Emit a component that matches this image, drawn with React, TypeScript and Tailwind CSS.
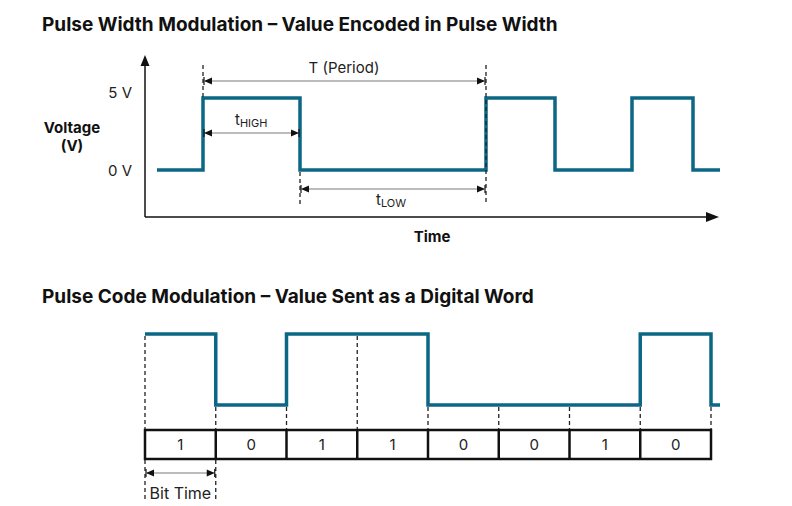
const TEAL = '#0b6784';

// dimension arrow with a tick and filled head at each end
function DimArrow({ x1, x2, y }: { x1: number; x2: number; y: number }) {
  return (
    <g>
      <line x1={x1 + 2} y1={y} x2={x2 - 2} y2={y} stroke="#7a7a7a" strokeWidth={1.2} />
      <polygon points={`${x1 + 1},${y} ${x1 + 9},${y - 3.5} ${x1 + 9},${y + 3.5}`} fill="#111" />
      <polygon points={`${x2 - 1},${y} ${x2 - 9},${y - 3.5} ${x2 - 9},${y + 3.5}`} fill="#111" />
      <line x1={x1 + 1} y1={y - 4} x2={x1 + 1} y2={y + 4} stroke="#111" strokeWidth={1.2} />
      <line x1={x2 - 1} y1={y - 4} x2={x2 - 1} y2={y + 4} stroke="#111" strokeWidth={1.2} />
    </g>
  );
}

function Dash({ x, y1, y2 }: { x: number; y1: number; y2: number }) {
  return <line x1={x} y1={y1} x2={x} y2={y2} stroke="#222" strokeWidth={1.3} strokeDasharray="4 3" />;
}

function PwmChart() {
  return (
    <svg width={792} height={225} viewBox="0 40 792 225" className="block font-['Inter',sans-serif]">
      {/* axes */}
      <line x1={145} y1={62} x2={145} y2={217} stroke="#111" strokeWidth={1.5} />
      <polygon points="145,55 140.5,66 149.5,66" fill="#111" />
      <line x1={145} y1={217} x2={708} y2={217} stroke="#111" strokeWidth={1.5} />
      <polygon points="719,217 706,212 706,222" fill="#111" />

      {/* waveform */}
      <polyline
        points="157,170 203,170 203,98 300,98 300,170 486,170 486,98 555,98 555,170 632,170 632,98 693,98 693,170 720,170"
        fill="none"
        stroke={TEAL}
        strokeWidth={3.5}
      />

      <Dash x={203} y1={65} y2={97} />
      <Dash x={300} y1={172} y2={204} />
      <Dash x={486} y1={65} y2={204} />

      <DimArrow x1={203} x2={486} y={81} />
      <DimArrow x1={203} x2={300} y={133} />
      <DimArrow x1={300} x2={486} y={189} />

      <text x={344} y={73} textAnchor="middle" fontSize={15} fill="#222">T (Period)</text>
      <text x={235} y={125} fontSize={15} fill="#222">
        t<tspan fontSize={11} dy={2}>HIGH</tspan>
      </text>
      <text x={376} y={205} fontSize={15} fill="#222">
        t<tspan fontSize={11} dy={2}>LOW</tspan>
      </text>

      <text x={132} y={98} textAnchor="end" fontSize={15} fill="#222">5 V</text>
      <text x={132} y={176} textAnchor="end" fontSize={15} fill="#222">0 V</text>
      <text x={72} y={133} textAnchor="middle" fontSize={15} fontWeight={700} fill="#111">Voltage</text>
      <text x={72} y={151} textAnchor="middle" fontSize={15} fontWeight={700} fill="#111">(V)</text>
      <text x={432} y={242} textAnchor="middle" fontSize={15} fontWeight={700} fill="#111">Time</text>
    </svg>
  );
}

const BITS = [1, 0, 1, 1, 0, 0, 1, 0];
// signal level per bit slot as drawn in the figure
const LEVELS = [1, 0, 1, 1, 0, 0, 0, 1];
const X0 = 145;
const CELL = 70.75;

function PcmChart() {
  const xs = LEVELS.map((_, i) => X0 + i * CELL);
  const hi = 334;
  const lo = 405;
  let pts = '';
  LEVELS.forEach((b, i) => {
    const y = b ? hi : lo;
    pts += `${xs[i]},${y} ${xs[i] + CELL},${y} `;
  });
  pts += `${X0 + 8 * CELL},${lo} 720,${lo}`;

  return (
    <svg width={792} height={196} viewBox="0 310 792 196" className="block font-['Inter',sans-serif]">
      <polyline points={pts} fill="none" stroke={TEAL} strokeWidth={3.5} />

      {xs.concat([X0 + 8 * CELL]).map((x, i) => {
        const prev = i > 0 ? LEVELS[i - 1] : 1;
        const cur = i < 8 ? LEVELS[i] : 0;
        const top = prev === 1 && cur === 1 ? hi + 2 : lo + 2;
        return <Dash key={i} x={x} y1={top} y2={430} />;
      })}

      <Dash x={X0} y1={460} y2={500} />
      <Dash x={X0 + CELL} y1={460} y2={500} />

      <rect x={X0} y={430} width={CELL * 8} height={29} fill="none" stroke="#111" strokeWidth={2.5} />
      {BITS.map((b, i) => (
        <g key={i}>
          {i > 0 && <line x1={xs[i]} y1={430} x2={xs[i]} y2={459} stroke="#111" strokeWidth={2.5} />}
          <text x={xs[i] + CELL / 2} y={450} textAnchor="middle" fontSize={15} fill="#222">{b}</text>
        </g>
      ))}

      <DimArrow x1={X0} x2={X0 + CELL} y={473} />
      <text x={X0 + CELL / 2} y={499} textAnchor="middle" fontSize={16} fill="#222">Bit Time</text>
    </svg>
  );
}

export default function App() {
  return (
    <div className="w-[792px] h-[506px] bg-white overflow-hidden font-['Inter',sans-serif]">
      <h2 className="pl-[42px] pt-[13px] h-[40px] text-[19px] leading-6 font-bold text-[#111]">
        Pulse Width Modulation – Value Encoded in Pulse Width
      </h2>
      <PwmChart />
      <h2 className="pl-[42px] pt-[20px] h-[45px] text-[19px] leading-6 font-bold text-[#111]">
        Pulse Code Modulation – Value Sent as a Digital Word
      </h2>
      <PcmChart />
    </div>
  );
}
